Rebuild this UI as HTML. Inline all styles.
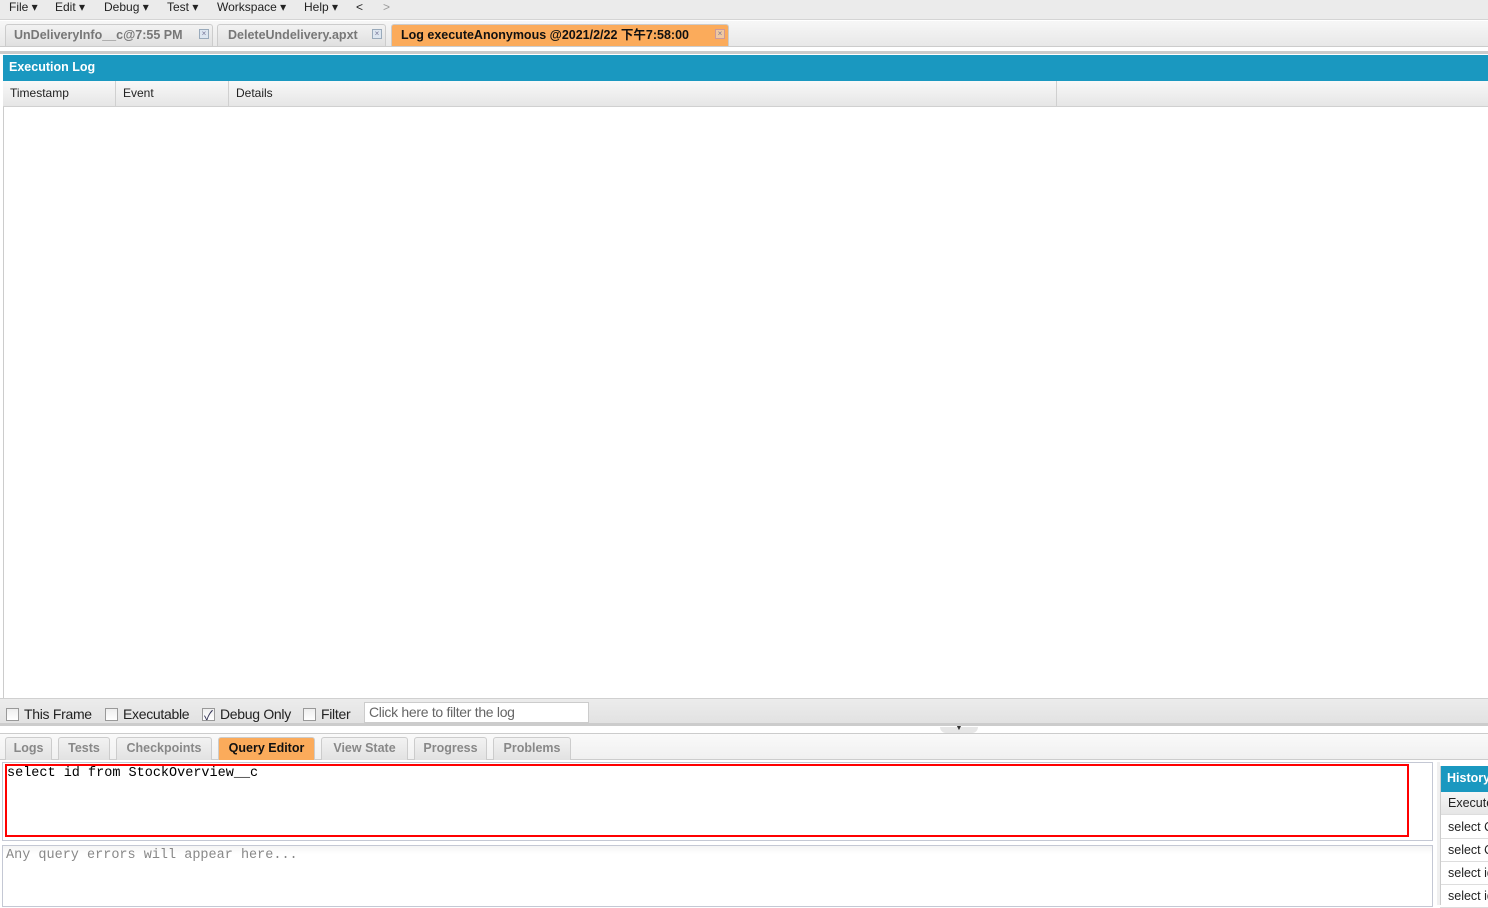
<!DOCTYPE html>
<html><head><meta charset="utf-8"><style>
*{margin:0;padding:0;box-sizing:border-box}
body{width:1488px;height:905px;overflow:hidden;background:#fff;font-family:"Liberation Sans","Noto Sans CJK SC",sans-serif;font-size:12px;color:#222;position:relative}
.a{position:absolute}
.menu{left:0;top:0;width:1488px;height:20px;background:#ebebeb;border-bottom:1px solid #d4d4d4}
.menu span{position:absolute;top:0;font-size:12px;color:#222;line-height:14px}
.tabbar{left:0;top:21px;width:1488px;height:26px;background:linear-gradient(#f7f7f7,#e8e8e8);border-bottom:1px solid #ccc}
.tab{position:absolute;top:3px;height:22px;background:linear-gradient(#f2f2f2,#e0e0e0);border:1px solid #ccc;border-bottom:none;border-radius:3px 3px 0 0;font-weight:bold;color:#777;font-size:12.5px;line-height:20px;padding-left:8px;white-space:nowrap}
.tab.on{background:#fbab5b;color:#111}
.x{position:absolute;top:4px;width:10px;height:10px;border:1px solid #9ab;background:#dde6f0;font-size:8px;line-height:8px;text-align:center;color:#779;font-weight:normal}
.hdr{background:#1a98c0;color:#fff;font-weight:bold;font-size:12.5px;line-height:25px;padding-left:6px}
.col{top:81px;height:26px;background:linear-gradient(#f8f8f8,#e6e6e6);border-bottom:1px solid #d0d0d0;border-right:1px solid #d0d0d0;line-height:24px;padding-left:7px;font-size:12px}
.cb{display:inline-block;width:13px;height:13px;border:1px solid #999;background:linear-gradient(#eee,#fff);vertical-align:-2px;margin-right:5px;position:relative}
.fb span.l{position:absolute;top:7px;font-size:14px;color:#222;letter-spacing:-0.3px}
.bt{position:absolute;top:737px;height:23px;background:linear-gradient(#f2f2f2,#e2e2e2);border:1px solid #ccc;border-bottom:none;border-radius:3px 3px 0 0;font-weight:bold;color:#888;text-align:center;line-height:20px;font-size:12.5px}
.bt.on{background:#fbab5b;color:#111}
.mono{font-family:"Liberation Mono","DejaVu Sans Mono",monospace;font-size:13.5px}
.hr{left:1440px;width:48px;height:23px;border-bottom:1px solid #ddd;padding-left:8px;line-height:22px;white-space:nowrap;overflow:hidden;font-size:12.5px}
</style></head><body>
<div class="a menu">
<span style="left:9px">File ▾</span><span style="left:55px">Edit ▾</span><span style="left:104px">Debug ▾</span><span style="left:167px">Test ▾</span><span style="left:217px">Workspace ▾</span><span style="left:304px">Help ▾</span><span style="left:356px">&lt;</span><span style="left:383px;color:#999">&gt;</span>
</div>
<div class="a tabbar">
<div class="tab" style="left:5px;width:208px">UnDeliveryInfo__c@7:55 PM<span class="x" style="left:193px">×</span></div>
<div class="tab" style="left:217px;width:169px;padding-left:10px">DeleteUndelivery.apxt<span class="x" style="left:154px">×</span></div>
<div class="tab on" style="left:391px;width:338px;padding-left:9px">Log executeAnonymous @2021/2/22 下午7:58:00<span class="x" style="left:323px;background:#f0c8a0;border-color:#c99">×</span></div>
</div>
<div class="a" style="left:0;top:49px;width:1488px;background:#fff;border-bottom:3px solid #ccc;height:5px"></div>
<div class="a hdr" style="left:3px;top:55px;width:1485px;height:26px">Execution Log</div>
<div class="a col" style="left:3px;width:113px">Timestamp</div>
<div class="a col" style="left:116px;width:113px">Event</div>
<div class="a col" style="left:229px;width:828px">Details</div>
<div class="a col" style="left:1057px;width:431px;border-right:none"></div>
<div class="a" style="left:3px;top:107px;width:1px;height:591px;background:#ccc"></div>
<div class="a fb" style="left:0;top:698px;width:1488px;height:28px;background:linear-gradient(#ececec,#e2e2e2);border-top:1px solid #d0d0d0;border-bottom:3px solid #ccc">
<span class="l" style="left:6px"><span class="cb"></span>This Frame</span>
<span class="l" style="left:105px"><span class="cb"></span>Executable</span>
<span class="l" style="left:202px"><span class="cb"><span style="position:absolute;left:1px;top:-4px;font-size:13px;color:#335">✓</span></span>Debug Only</span>
<span class="l" style="left:303px"><span class="cb"></span>Filter</span>
<div class="a" style="left:364px;top:3px;width:225px;height:21px;background:#fff;border:1px solid #ccc;font-size:14px;color:#666;line-height:19px;padding-left:4px;letter-spacing:-0.3px">Click here to filter the log</div>
</div>
<div class="a" style="left:940px;top:727px;width:38px;height:6px;background:#e6e6e6;border-radius:0 0 6px 6px;font-size:7px;text-align:center;line-height:4px;color:#333">▼</div>
<div class="a" style="left:0;top:733px;width:1488px;height:27px;background:linear-gradient(#fafafa,#f0f0f0);border-top:1px solid #ccc;border-bottom:1px solid #ccc"></div>
<div class="bt" style="left:5px;width:47px">Logs</div>
<div class="bt" style="left:58px;width:52px">Tests</div>
<div class="bt" style="left:116px;width:96px">Checkpoints</div>
<div class="bt on" style="left:218px;width:97px">Query Editor</div>
<div class="bt" style="left:321px;width:87px">View State</div>
<div class="bt" style="left:414px;width:73px">Progress</div>
<div class="bt" style="left:493px;width:78px">Problems</div>
<div class="a" style="left:2px;top:762px;width:1431px;height:79px;border:1px solid #c4c8d4;background:#fff"></div>
<div class="a mono" style="left:5px;top:764px;width:1404px;height:73px;border:2px solid #f00;line-height:16px;color:#000">select id from StockOverview__c</div>
<div class="a mono" style="left:2px;top:845px;width:1431px;height:62px;border:1px solid #c4c8d4;background:linear-gradient(#f4f4f4,#fff 8px);color:#888;padding:1px 3px;line-height:18px">Any query errors will appear here...</div>
<div class="a" style="left:1437px;top:762px;width:3px;height:143px;background:#f0f0f0"></div>
<div class="a hdr" style="left:1440px;top:766px;width:48px;height:26px;padding-left:7px;line-height:24px">History</div>
<div class="a hr" style="top:792px;background:linear-gradient(#f6f6f6,#e6e6e6)">Executed</div>
<div class="a hr" style="top:816px">select Q</div>
<div class="a hr" style="top:839px">select Q</div>
<div class="a hr" style="top:862px">select id</div>
<div class="a hr" style="top:885px">select id</div>
<div class="a" style="left:1440px;top:766px;width:1px;height:139px;background:#ccc"></div>
</body></html>
